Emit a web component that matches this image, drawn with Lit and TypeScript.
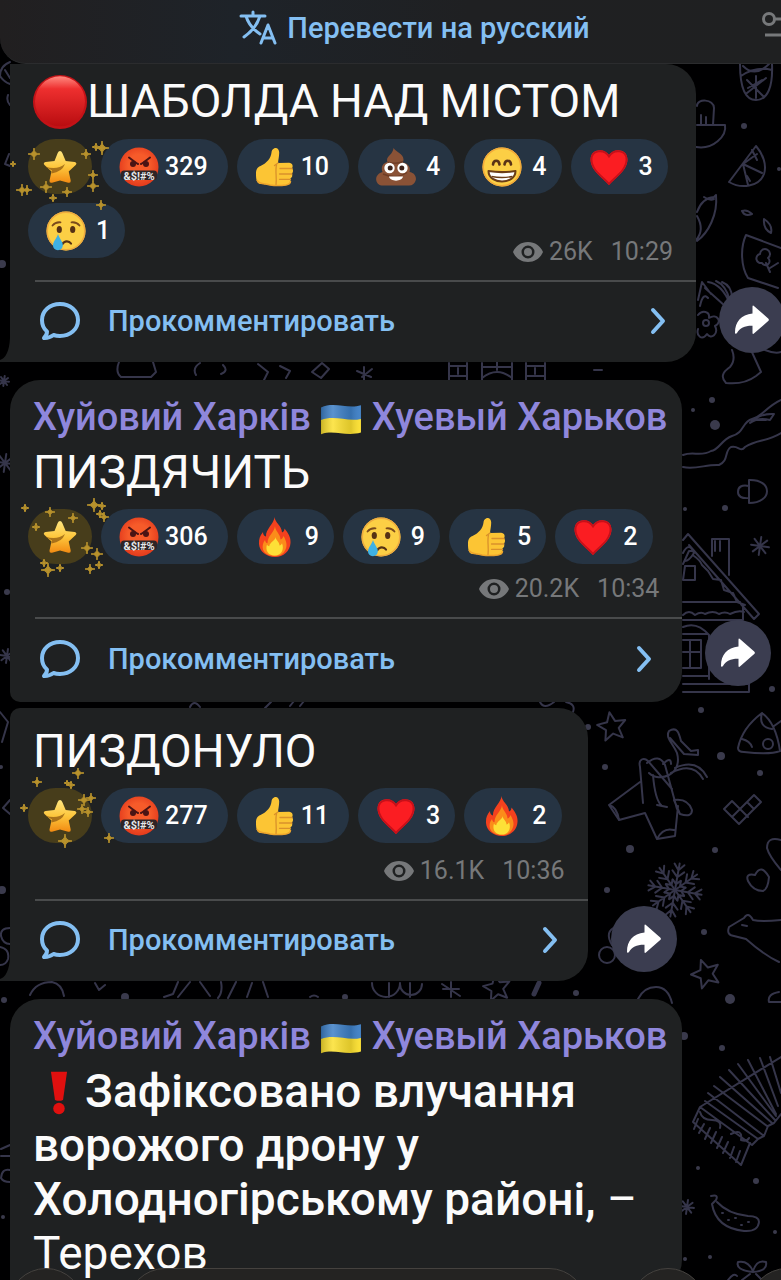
import { LitElement, html, svg, css, nothing, TemplateResult } from "lit";
import { customElement, property } from "lit/decorators.js";
import { classMap } from "lit/directives/class-map.js";

type Emoji = "rage" | "thumb" | "poo" | "grin" | "heart" | "cry" | "fire" | "ball" | "bang" | "flag";

interface Reaction { emoji: Emoji; count: number; }
interface Message {
  title?: boolean;
  text: TemplateResult;
  reactions: Reaction[];
  sparks: number[][];
  views?: string;
  time?: string;
  top?: boolean;
  tail?: boolean;
  inlineMeta?: boolean;
}

const EMOJI: Record<Emoji, TemplateResult> = {
  rage: svg`
    <defs><radialGradient id="rg" cx=".5" cy=".45" r=".55"><stop offset=".5" stop-color="#f65b2a"/><stop offset="1" stop-color="#e33a1c"/></radialGradient></defs>
    <circle cx="20" cy="20" r="19.500" fill="url(#rg)"/>
    <path d="M10 10.500q7 5.500 9 6.500M31 10.500q-7 5.500-9 6.500" stroke="#4a1414" stroke-width="2" fill="none" stroke-linecap="round"/>
    <circle cx="14" cy="17" r="3" fill="#4a1414"/><circle cx="27" cy="17" r="3" fill="#4a1414"/>
    <rect x="2" y="23.500" width="36" height="9.500" rx="3" fill="#2f2426"/>
    <text x="20" y="32.500" text-anchor="middle" font-size="11" font-weight="700" font-family="Roboto, sans-serif" fill="#e6e8ea">&amp;$!#%</text>`,
  thumb: svg`
    <path d="M19 1.500c2.500-1.500 5.200.5 5.200 4 0 4-1 7.500-1.200 10.500l11-.3c3.500.2 4.500 3.500 3 5.600 1.500 1.700 1.400 4-.2 5.300 1 2 .4 4-1.400 5 .5 2.500 0 5.900-3.600 6.400-6 .8-12 1-16.800 0C10 37 8 37.500 5.500 37 1.500 36.500 1 32 1 27c0-4.500 1-6.500 4.500-8C12 16 16 11 16.500 5.500c.1-2 1-3.200 2.500-4z" fill="#fcc534"/>
    <path d="M23 16l-3.500 2.500M25 21.500H37M24.500 27h12.500M24.500 32.300h11M21.500 18c-1.500 6 .5 12-.5 20" stroke="#d9912b" stroke-width="1.300" fill="none" stroke-linecap="round"/>
    <path d="M2 33c1.500 4.500 8 3.500 13 5 6 .8 11 .6 16 0 3-.5 4.500-2 4.500-4" stroke="#eda42c" stroke-width="1.500" fill="none"/>`,
  poo: svg`
    <path d="M17.500 1c2 3.500 10.500 6 10 12-.1 1.200-.5 2-1 2.500 5.500.5 8.500 5 7 9.500 5 .8 7 4.500 6.300 8-.8 3.500-3.300 5.500-6.800 5.500H7c-4 0-6.300-2-6.800-5.500C-.3 29.500 2.500 26 6.500 25c-2-5 .5-9 5-10-2.500-5.500 5.500-7 6-14z" fill="#8a5236"/>
    <path d="M7 27c8 3.500 17 3 24-1.500M12 15.500c5 1 11 1 15-1" stroke="#6f3d26" stroke-width="1.400" fill="none"/>
    <circle cx="13.500" cy="21" r="5.200" fill="#fff"/><circle cx="26.500" cy="21" r="5.200" fill="#fff"/>
    <circle cx="14.200" cy="21" r="2.500" fill="#3b2119"/><circle cx="25.800" cy="21" r="2.500" fill="#3b2119"/>
    <path d="M13 29.500h14c-1 5.500-13 5.500-14 0z" fill="#fff"/>`,
  grin: svg`
    <circle cx="20" cy="20" r="19.500" fill="#fccf45"/><circle cx="20" cy="20" r="18.800" fill="none" stroke="#f2a93a" stroke-width="1.500"/>
    <path d="M11 17.500c.5-5 6-5 6.500 0M22.500 17.500c.5-5 6-5 6.500 0" stroke="#5a3316" stroke-width="2.600" fill="none" stroke-linecap="round"/>
    <path d="M6.500 24c9 1.500 18 1.500 27 0 0 14-27 14-27 0z" fill="#fff" stroke="#6b3d17" stroke-width="2" stroke-linejoin="round"/>
    <path d="M9.500 29.500c7 1.300 14 1.300 21 0" stroke="#6b3d17" stroke-width="1.300" fill="none"/>`,
  heart: svg`
    <path d="M20 38C14 31 1.500 23.500 1.500 12.500 1.500 1.500 15 .5 20 8c5-7.500 18.500-6.500 18.500 4.500C38.500 23.500 26 31 20 38z" fill="#fb1d22"/>
    <path d="M20 36.800C14 30 2.500 23 2.500 12.500 2.500 2.800 15.200 1.500 20 9.500 24.800 1.500 37.500 2.800 37.500 12.500 37.500 23 26 30 20 36.800z" fill="none" stroke="#c71019" stroke-width="1.800"/>`,
  cry: svg`
    <circle cx="20" cy="20" r="19.500" fill="#fccf45"/><circle cx="20" cy="20" r="18.800" fill="none" stroke="#eeab3f" stroke-width="1.500"/>
    <path d="M6.500 14.500c2-2.500 5-3.500 8-3.200M33.500 14.500c-2-2.500-5-3.500-8-3.200" stroke="#7a4a1c" stroke-width="1.800" fill="none" stroke-linecap="round"/>
    <ellipse cx="13.300" cy="18.500" rx="2.600" ry="3.600" fill="#563114"/><ellipse cx="26.700" cy="18.500" rx="2.600" ry="3.600" fill="#563114"/>
    <path d="M16.500 33c2-3.500 6.500-3.500 8.500-.5" stroke="#563114" stroke-width="2.200" fill="none" stroke-linecap="round"/>
    <path d="M12 23c1.500 5 5 7.500 4.800 11.500-.2 2.800-2.300 4.700-4.800 4.700-3 0-5-2-5-4.900 0-3.800 3.500-6.300 5-11.300z" fill="#3fb1e3"/>`,
  fire: svg`
    <path d="M19.500 0c0 5 7.500 9 7.500 15.500 2-1 2.500-2.500 2.500-4 3.500 4.500 6.500 8.500 6 14.500C35 34 28.500 40 20 40S4.500 34.500 4 27c-.3-5 1-8.500 4-12 0 2.500 1 4 3 4.500C10.500 12 19 7 19.500 0z" fill="#f4411e"/>
    <path d="M20 9c0 5 5.500 8 5.500 13.500 1.500-.5 2.500-2 3-3.500 3 5 4 9.500 2 13.500-2 4.500-5.500 6.500-10.500 6.500S9.500 37 8 32.500c-1-3.500 0-7 2-9.500.3 2 1.200 3 2.500 3.300C12.500 18.500 19.500 15.500 20 9z" fill="#fb8c1a"/>
    <path d="M20.500 20c0 3 4 5 4 8.500 1.200-.3 2-1.200 2.500-2.300 2.500 6-.5 12.300-7.300 12.300-7 0-9.500-5.500-7.700-11 .5 1.200 1.300 1.700 2.300 1.700.3-4 6-5.200 6.200-9.200z" fill="#fde037"/>`,
  ball: svg`
    <defs><linearGradient id="bl" x1="0" y1="0" x2="0" y2="1"><stop offset="0" stop-color="#ff8a80"/><stop offset=".25" stop-color="#ee2f2f"/><stop offset="1" stop-color="#b90d10"/></linearGradient></defs>
    <circle cx="20" cy="20" r="20" fill="#c31217"/><circle cx="20" cy="19.500" r="18.500" fill="url(#bl)"/>`,
  bang: svg`
    <path d="M13 1.500h14L23.500 26q-3.500 1.500-7 0z" fill="#e0100f"/><circle cx="20" cy="33.500" r="5" fill="#e0100f"/>`,
  flag: svg`
    <defs><linearGradient id="fl" x1="0" x2="1" y1="0" y2="0"><stop offset="0" stop-color="#000" stop-opacity=".2"/><stop offset=".3" stop-color="#fff" stop-opacity=".15"/><stop offset=".75" stop-color="#000" stop-opacity=".12"/><stop offset="1" stop-color="#fff" stop-opacity=".05"/></linearGradient></defs>
    <path d="M1 8c13-6 25 2 38-2v14c-15 5-25-4-38 1z" fill="#3d7fc6"/>
    <path d="M1 20c13-5 25 2 38-1v13c-15 4-25-3-38 1.500z" fill="#fce02f"/>
    <path d="M1 8c13-6 25 2 38-2v26c-15 4-25-3-38 1.500z" fill="url(#fl)"/>`,
};

const emoji = (name: Emoji, kind = "") => html`<svg class=${"emoji " + kind} viewBox="0 0 40 40" aria-hidden="true">${EMOJI[name]}</svg>`;

const spark = ([x, y, r]: number[]) => svg`<path d="M${x} ${y - r}Q${x} ${y} ${x + r} ${y}Q${x} ${y} ${x} ${y + r}Q${x} ${y} ${x - r} ${y}Q${x} ${y} ${x} ${y - r}z"/>`;

@customElement("chat-wallpaper")
class ChatWallpaper extends LitElement {
  static styles = css`
    :host { display: block; position: absolute; inset: 0; background: #000001; }
    svg { width: 100%; height: 100%; display: block; }
    .line { fill: none; stroke: #35354a; stroke-width: 2; stroke-linecap: round; stroke-linejoin: round; }
    .dot { fill: #3a3a4c; }
  `;

  private star(x: number, y: number, r: number, a = -80) {
    const pts = Array.from({ length: 10 }, (_, i) => {
      const t = ((a + i * 36) * Math.PI) / 180;
      const d = i % 2 ? r * 0.45 : r;
      return `${(x + d * Math.cos(t)).toFixed(1)},${(y + d * Math.sin(t)).toFixed(1)}`;
    });
    return svg`<polygon points=${pts.join(" ")}/>`;
  }

  private burst(x: number, y: number, r: number) {
    return svg`<path d=${[0, 45, 90, 135].map((a) => {
      const c = r * Math.cos(((a + 8) * Math.PI) / 180), s = r * Math.sin(((a + 8) * Math.PI) / 180);
      return `M${x - c} ${y - s}L${x + c} ${y + s}`;
    }).join("")}/>`;
  }

  private snowflake(x: number, y: number) {
    return svg`<g transform="translate(${x} ${y})">${[10, 55, 100, 145, 190, 235, 280, 325].map((a) => svg`
      <path transform="rotate(${a})" d="M0 0H27M13 0l6-6M13 0l6 6M20 0l6-5M20 0l6 5M6 0l4-4M6 0l4 4"/>`)}</g>`;
  }

  render() {
    const dots = [[744, 126, 3], [779, 169, 2], [712, 400, 3], [693, 410, 2], [715, 425, 5], [685, 509, 2], [725, 508, 3], [588, 727, 3],
      [701, 710, 3], [721, 756, 4], [605, 767, 3], [760, 773, 3], [630, 849, 4], [715, 850, 3], [607, 890, 3], [704, 932, 3], [576, 993, 3],
      [730, 999, 5], [684, 1036, 4], [722, 1048, 3], [698, 1168, 2], [756, 1181, 3], [775, 1232, 2], [710, 1257, 2], [2, 264, 4], [1, 767, 2],
      [2, 890, 4], [4, 1000, 3], [125, 997, 4], [3, 1217, 2], [7, 592, 3], [772, 689, 3], [685, 1259, 2], [345, 997, 3]];
    return html`<svg viewBox="0 0 781 1280" preserveAspectRatio="xMidYMin slice" aria-hidden="true">
      <g class="line">
        <path d="M740 64c0 22 4 36 16 36s17-14 16-36M741 76q15-10 31-6M743 66q12 12 26-2M747 80l17 17M766 78l-19 15M756 76v22M748 88l14-8"/>
        <path d="M697 106c0-8 17-7 17 2l-1 17M697 125h28c2 11-12 25-29 22M701 115v9M706 117v7"/>
        <path d="M756 146L729 182c12 7 30 5 35-8 3-9-1-20-8-28zM743 164l19 9M743 164l5 21M743 164l14-10M752 150l5 10M747 176l3 5"/>
        <path d="M697 212q5-14 17-15l2-2c2 20-8 38-19 46M697 216q8 14-1 24M704 197q6 4 10 2"/>
        <path d="M742 211q5-2 10 3-7 3-10-3zM764 219q9 6 7 14-8-4-7-14zM746 235l35 13M746 235c-6 13-5 32 2 43l30 10M760 254a5 5 0 1 1 8 4 4 4 0 1 1-6 5 4 4 0 1 1-2-9zM766 263l4 9M770 268l8-5"/>
        <path d="M698 300l4-18 9 12M700 306q3-14 8-8M705 288l20 18M708 282q14 2 22 22M716 281q10 4 14 20M722 282q10 4 10 16M698 315c4-5 12-4 11 3 8-5 14 4 6 8 4 8-4 14-8 8-5 7-11 2-9-5M703 323a3 3 0 1 0 6 0 3 3 0 1 0-6 0M732 350q4 10-2 17-12 8-4 16 18 2 30-7l5-4-10-22M765 350q10 4 16 2"/>
        <path d="M449 363v17M467 363v17M449 366h18M449 376h18M458 368v6M482 363v17M512 363v17M482 367h30M482 378q15-12 30 0M497 362v8M526 363v17M545 363v17M526 366h19M526 376h19M535 368v6"/>
        <path d="M119 362q-4 10 2 15h30l5-5-3-10M200 363q-8 5-4 12M223 365q6 6-2 9M258 364l10 8-4 8M280 366l10 5-4 7M312 372l10-9 7 6-8 9zM357 371l14 6M364 367v13M372 369l-10 8M594 370h8"/>
        <path d="M683 455c10-4 18 2 28-4 8-1 10-11 21-15 12-3 10-14 20-17 10-2 14-12 29-19M683 467c12 3 24-3 36-2 10-4 5-14 12-18 8-2 9 6 14 0 12-8 22-5 36-14M750 423q10-10 24-9l-4 6q-12-3-20 3zM756 420h10"/>
        <path d="M749 480v23c24 0 24-24 0-23zM749 486q-11-2-11 6 0 7 11 6"/>
        <path d="M683 540l5-6 71 80-5 5-65-74M683 564l6-13 5 0M683 553q6-12 11 0-5 8-9 8M685 566h10v14h-12zM712 556v-17h17v36M715 541v10M720 541v10M694 556q6 4 8 9l6 6 5 8 8 1 3 10 9 3 4 9 8 3M683 602h57M683 615q6-6 12 0 6-4 10-1 8-4 14 0 6-3 11 0 8-4 14-2M683 620h60v-14M683 627q14-6 26 8v44M683 634h24M683 640h18v28h-18M690 640v28M683 652h18M683 676h26M683 684h66v8h-66M683 692h66v-12"/>
        ${this.burst(760, 546, 9)}
        ${this.star(612, 727, 15, -100)}
        <path d="M643 803l-3-36c-2-8 4-10 8-6l24 28M640 782l-31 23 10 15 26-7M609 805q8 2 10 15M645 813l12 26 18-3 3-30M657 839q6-12 17-9M647 763q12-10 18 2l12 44M649 773c10 10 34 2 28-20-4-10-12-15-8-22 8-5 10 2 12 10l10 10 7-1 0 5-14-1-14-16M675 768q22-10 32 9M671 773q22-12 32 6M663 764q8-8 8 0M674 800q14-2 18 10 0 8-12 4zM653 775q2 24 8 30M657 805l10 2"/>
        <path d="M738 748q4-20 24-35 14 10 18 38-10 4-36 1-6 0-6-4zM762 713q-4 14 10 16M742 739q8 2 10 8M763 744a5 5 0 1 1 10 0 5 5 0 1 1-10 0M774 726l7-5"/>
        <path d="M724 809l8-8 8 8 14-14 7 7-22 22zM732 817l8-8 8 8M747 802l7 7"/>
        ${this.snowflake(675, 890)}
        <path d="M748 881q-3-8 7-6 6-12 14 2-1 12-6 14-10 0-15-10zM781 840q-14-4-14 8 2 8 14 22"/>
        <path d="M781 920q-20 2-28 0-5-9-9-2l-15 9q-3 8 5 9l12 3q18 16 33 23M742 925l5 1M781 1002h-12q-2-8 10-10"/>
        ${this.star(706, 974, 15, -110)}
        <circle cx="607" cy="955" r="8"/><path d="M612 945q-8-14 4-18"/>
        <path d="M638 999q6-12 18-12 12 0 16 16M443 989h16M451 982v15M442 984l18 12M400 984a11 11 0 0 0 22 0M410 983v14"/>
        <path d="M539 983l-5 11" stroke-width="5"/>
        ${this.star(497, 988, 14, -100)}
        <path d="M95 983l4 7 6-5M30 995q6-13 22-13 10 2 12 14M178 982l-5 12-9 3M190 982l-12 15M200 982l10 14M221 982q2 10-3 16M236 982l-8 16M252 983l-5 14M263 982l5 15M372 983a14 14 0 0 0 28 0M389 983v14M310 997q4-3 8 0"/>
        <path d="M700 1107L781 1057M700 1107l-7 15 48 43 9-22M693 1122l48 43M698 1119l-4 10M704 1124l-5 9M710 1128l-5 11M716 1132l-5 11M722 1137l-5 11M728 1142l-5 11M734 1147l-4 11M740 1151l-4 11M700 1107l52 38 6-6 6-3 4-10 6-3 7-9M705 1101l53 38M708 1093l56 43M714 1086l53 40M720 1077l52 46M729 1070l46 50M738 1064l38 52M748 1060l28 54M760 1058l18 48M770 1057l11 36M700 1112q2 8 12 8 10 0 8 8M731 1134q12-6 10 6 6 2 8-2"/>
        <path d="M711 1196q8-2 5 4l-4 4q4 24 32 27 14 1 15-9 0-6-11-6-20-2-31-14M722 1213h1M728 1220h1M735 1218h1M741 1225h1M748 1222h1"/>
        ${this.burst(687, 1207, 7)}
        <path d="M753 1272q-18-2-15-10 10-2 15 9 4-12 13-9 2 9-13 10zM750 1274l-8 6M756 1274l6 6M728 1280q6-8 9-4"/>
        <path d="M10 62Q0 66 0 76q4 6 10 8M5 70l5 8M9 154l-4 10 5 2M8 95q-2 6 2 10M0 712l8 10-6 20M10 800l-7 8 7 6M10 928q-10 0-9 8 2 8 9 8M0 947q10 2 8 12-2 6-8 6M10 1145l-9 4M10 1156H1M10 1170q-8-2-9 8 2 4 9 4M190 707q4-8 10 0M265 708l6-6M290 706l4-5M300 706l4-5M540 702q4 8 14 0M566 702q10 2 7 10"/>
        ${this.burst(4, 381, 5)}${this.burst(5, 463, 9)}${this.burst(7, 656, 7)}
      </g>
      <g class="dot">${dots.map(([x, y, r]) => svg`<circle cx=${x} cy=${y} r=${r}/>`)}</g>
    </svg>`;
  }
}

@customElement("chat-message")
class ChatMessage extends LitElement {
  @property({ attribute: false }) message!: Message;

  static styles = css`
    :host { display: flex; align-items: flex-end; gap: 23px; position: relative; }
    .card { flex: 0 1 auto; position: relative; min-width: 0; max-width: calc(100% - 85px); box-sizing: border-box;
      background: #1f2122; border-radius: 30px 30px 30px 10px; padding-top: 15px; }
    .card.follow { border-radius: 10px 30px 30px 0; padding-top: 16px; }
    .card.top { border-radius: 0 30px 30px 0; padding-top: 10px; }
    .tail { position: absolute; left: -10px; bottom: 0; width: 10px; height: 24px; fill: #1f2122; }
    .title { margin: 0 15px 6px 23px; font-size: 38px; line-height: 44px; font-weight: 500; color: #8f87dc; white-space: nowrap; }
    .text { margin: 0 23px 10px; width: 0; min-width: calc(100% - 46px); font-size: 46px; line-height: 54px; color: #fbfbfb; }
    .text b { font-weight: 500; }
    .emoji { width: 40px; height: 40px; flex: none; display: block; }
    .emoji.inline { display: inline-block; width: 42px; height: 42px; vertical-align: -9px; margin: -2px 0; }
    .emoji.large { display: inline-block; width: 54px; height: 54px; vertical-align: -12px; }
    .emoji.mark { display: inline-block; width: 52px; height: 46px; vertical-align: -9px; }
    .reactions { display: flex; flex-wrap: wrap; gap: 9px; padding: 0 26px 0 18px; }
    .chip { all: unset; cursor: pointer; display: flex; align-items: center; box-sizing: border-box; height: 55px; padding: 0 20px 0 18px; gap: 6px;
      border-radius: 28px; background: #263443; color: #fff; font-size: 25px; line-height: 30px; font-weight: 500; }
    .chip.single { gap: 10px; padding-right: 15px; }
    .chip.star { position: relative; width: 64px; padding: 0; justify-content: center; background: #473d1b; }
    .star svg.face { width: 36px; height: 36px; }
    .sparks { position: absolute; left: -28px; top: -20px; width: 130px; height: 96px; z-index: 1; fill: #b8922c; stroke: #b8922c; stroke-width: 1; pointer-events: none; }
    .meta { display: flex; justify-content: flex-end; align-items: center; margin: 10px 23px 13px; font-size: 25px; line-height: 30px; color: #76787a; }
    .meta svg { width: 30px; height: 22px; margin-right: 6px; }
    .meta time { margin-left: 18px; }
    .tailed .meta { margin-top: 13px; }
    .tailed .meta.raised { margin-top: -21px; }
    .comment { all: unset; cursor: pointer; box-sizing: border-box; display: flex; align-items: center; width: calc(100% - 25px); height: 85px; margin-left: 25px;
      padding: 0 30px 3px 5px; border-top: 2px solid #494b4c; color: #84bff2; font-size: 29px; line-height: 34px; font-weight: 500; }
    .tailed .comment { height: 82px; padding-bottom: 2px; }
    .comment svg { flex: none; fill: none; stroke: currentColor; stroke-width: 4; stroke-linecap: round; stroke-linejoin: round; }
    .bubble { width: 40px; height: 40px; margin-right: 28px; }
    .chevron { width: 16px; height: 28px; margin-left: auto; }
    .share { all: unset; cursor: pointer; flex: none; display: grid; place-items: center; width: 66px; height: 66px; margin: 0 -10px 16px 0; border-radius: 50%; background: #3b3d50; }
    .share.low { margin-bottom: 9px; }
    .share svg { width: 36px; height: 30px; fill: #fff; }
  `;

  render() {
    const m = this.message;
    return html`
      <article class=${classMap({ card: true, top: !!m.top, tailed: !!m.tail, follow: !!m.tail && !m.top })}>
        ${m.tail ? html`<svg class="tail" viewBox="0 0 10 24" aria-hidden="true"><path d="M10 0Q9 19 0 22v2h10z"/></svg>` : nothing}
        ${m.title ? html`<div class="title">Хуйовий Харків ${emoji("flag", "inline")} Хуевый Харьков</div>` : nothing}
        <div class="text">${m.text}</div>
        ${m.reactions.length ? html`
          <div class="reactions">
            <button class="chip star" aria-label="Star">
              <svg class="face" viewBox="0 0 36 36" aria-hidden="true">
                <defs><linearGradient id="st" x1="0" y1="0" x2="0" y2="1"><stop offset="0" stop-color="#ffe680"/><stop offset=".5" stop-color="#fdc63c"/><stop offset="1" stop-color="#f28a12"/></linearGradient></defs>
                <path d="M18 2q1.500 0 2.300 2l3.400 8 9 1q2.800.8 1 3l-7 6.500 2 9q.3 3-2.500 2.200L18 31.500l-8 2.200q-2.800.8-2.500-2.200l2-9-7-6.500q-1.800-2.200 1-3l9-1 3.200-8Q16.500 2 18 2z" fill="url(#st)"/>
                <path d="M3 17.500q12 4 20-2.500-3 8-13.500 9.500l.5-3z" fill="#8d5a12" opacity=".75"/>
              </svg>
              <svg class="sparks" viewBox="0 0 130 96" aria-hidden="true">${m.sparks.map(spark)}</svg>
            </button>
            ${m.reactions.map((r) => html`
              <button class=${classMap({ chip: true, single: r.count < 10 })}>${emoji(r.emoji)}<span>${r.count}</span></button>`)}
          </div>
          <div class=${classMap({ meta: true, raised: !!m.inlineMeta })}>
            <svg viewBox="0 0 30 22" aria-hidden="true"><path fill="currentColor" fill-rule="evenodd" d="M15 1C8 1 2.500 5 0 11c2.500 6 8 10 15 10s12.500-4 15-10C27.500 5 22 1 15 1zm0 3.500a6.500 6.500 0 1 1 0 13 6.500 6.500 0 0 1 0-13zM15 7a4 4 0 1 0 0 8 4 4 0 0 0 0-8z"/></svg>
            <span>${m.views}</span><time>${m.time}</time>
          </div>
          <button class="comment">
            <svg class="bubble" viewBox="0 0 40 40" aria-hidden="true"><path d="M20 3C10 3 2 9.800 2 19c0 5 2 9 5 11.500 0 3-1.500 5-3 6.500 4 .2 7.500-1.500 9.500-3 2 .7 4.200 1 6.500 1 10 0 18-6.500 18-16S30 3 20 3z"/></svg>
            <span>Прокомментировать</span>
            <svg class="chevron" viewBox="0 0 16 28" aria-hidden="true"><path d="M3 3l10 11L3 25"/></svg>
          </button>` : nothing}
      </article>
      ${m.reactions.length ? html`
        <button class=${classMap({ share: true, low: !!m.tail })} aria-label="Share">
          <svg viewBox="0 0 36 30" aria-hidden="true"><path d="M18.500 1.800q0-2 1.700-.6l14 12.300q1.400 1.300 0 2.600l-14 12.200q-1.700 1.400-1.700-.6v-6.900C11 20.600 6 23 3 28c-.8 1.200-2 1-2-.5C1 17 7 9.500 18.500 8.500z"/></svg>
        </button>` : nothing}`;
  }
}

@customElement("app-root")
class AppRoot extends LitElement {
  static styles = css`
    :host { display: block; position: relative; height: 100vh; overflow: hidden; background: #000001; font-family: Roboto, "Noto Sans", sans-serif; }
    .bar { position: relative; z-index: 2; display: flex; align-items: center; justify-content: center; height: 64px; box-sizing: border-box; padding-bottom: 7px;
      border-bottom: 1px solid #2b2c2e; border-bottom-left-radius: 26px; background: linear-gradient(90deg, #211f20, #1e2329 30%, #1f2022 60%, #1f2021); }
    .translate { all: unset; cursor: pointer; display: flex; align-items: center; gap: 10px; padding-left: 48px; margin-right: auto; margin-left: auto; color: #84bff2; font-size: 29px; line-height: 36px; font-weight: 500; }
    .translate svg { width: 38px; height: 36px; fill: none; stroke: currentColor; stroke-width: 3; stroke-linecap: round; stroke-linejoin: round; }
    .options { all: unset; cursor: pointer; position: absolute; right: -12px; top: 8px; width: 32px; height: 36px; }
    .options svg { width: 32px; height: 36px; fill: none; stroke: #77797b; stroke-width: 3; }
    .feed { position: relative; z-index: 1; display: flex; flex-direction: column; gap: 18px; padding-left: 10px; }
    .near { margin-top: -12px; }
    .composer { position: absolute; z-index: 3; left: 0; right: 0; bottom: 0; height: 12px; overflow: hidden; display: flex; align-items: flex-start; gap: 43px; padding: 0 0 0 8px; }
    .composer > * { flex: none; box-sizing: border-box; height: 76px; border: 1px solid #45423f; border-radius: 38px; background: #242322; padding: 0; }
    .composer button { width: 76px; }
    .composer input { flex: 1 1 0; min-width: 0; color: #fff; padding: 0 30px; outline: 0; }
    .composer .last { margin-right: -44px; }
  `;

  private messages: Message[] = [
    {
      top: true, tail: true, inlineMeta: true, views: "26K", time: "10:29",
      text: html`${emoji("ball", "large")}ШАБОЛДА НАД МІСТОМ`,
      reactions: [{ emoji: "rage", count: 329 }, { emoji: "thumb", count: 10 }, { emoji: "poo", count: 4 }, { emoji: "grin", count: 4 }, { emoji: "heart", count: 3 }, { emoji: "cry", count: 1 }],
      sparks: [[34, 35, 6], [86, 35, 5], [102, 29, 7], [96, 28, 4], [93, 56, 5], [22, 71, 6], [27, 71, 5], [46, 68, 6], [67, 73, 5], [93, 67, 6], [53, 79, 4], [101, 86, 5], [13, 45, 3]],
    },
    {
      title: true, views: "20.2K", time: "10:34", text: html`ПИЗДЯЧИТЬ`,
      reactions: [{ emoji: "rage", count: 306 }, { emoji: "fire", count: 9 }, { emoji: "cry", count: 9 }, { emoji: "thumb", count: 5 }, { emoji: "heart", count: 2 }],
      sparks: [[25, 19, 4], [50, 23, 5], [94, 16, 7], [102, 17, 4], [100, 25, 4], [104, 28, 5], [73, 29, 5], [36, 38, 4], [87, 59, 6], [97, 65, 6], [48, 81, 7], [60, 79, 4], [90, 80, 5], [99, 76, 4], [44, 74, 4]],
    },
    {
      tail: true, views: "16.1K", time: "10:36", text: html`ПИЗДОНУЛО`,
      reactions: [{ emoji: "rage", count: 277 }, { emoji: "thumb", count: 11 }, { emoji: "heart", count: 3 }, { emoji: "fire", count: 2 }],
      sparks: [[37, 14, 5], [78, 5, 6], [67, 15, 3], [71, 17, 4], [24, 40, 4], [84, 32, 6], [91, 30, 5], [82, 41, 5], [88, 44, 5], [65, 73, 7], [109, 70, 5]],
    },
    {
      title: true, reactions: [], sparks: [],
      text: html`<b>${emoji("bang", "mark")}Зафіксовано влучання ворожого дрону у Холодногірському районі,</b> – Терехов`,
    },
  ];

  render() {
    return html`
      <chat-wallpaper></chat-wallpaper>
      <header class="bar">
        <button class="translate">
          <svg viewBox="0 0 38 36" aria-hidden="true"><path d="M2 6h24M14 2v4M21 6C18 16 12 22 5 27M7 6c2 7 8 14 14 18M22 33l7-18 7 18M24.500 28h9"/></svg>
          <span>Перевести на русский</span>
        </button>
        <button class="options" aria-label="Settings"><svg viewBox="0 0 32 36" aria-hidden="true"><circle cx="8" cy="11" r="5.500"/><path d="M13.500 11H32M4 27h28"/></svg></button>
      </header>
      <main class="feed">
        ${this.messages.map((m, i) => html`<chat-message class=${i === 2 ? "near" : ""} .message=${m}></chat-message>`)}
      </main>
      <footer class="composer">
        <button aria-label="Menu"></button>
        <input aria-label="Message" />
        <button aria-label="Gift"></button>
        <button class="last" aria-label="Search"></button>
      </footer>`;
  }
}
